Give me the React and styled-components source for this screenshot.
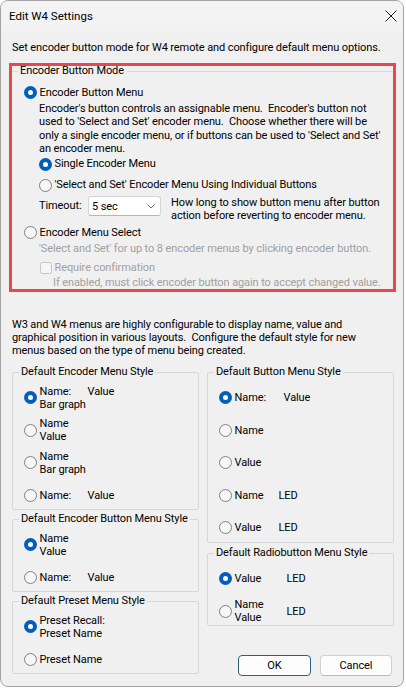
import React from "react";
import styled, { createGlobalStyle, css } from "styled-components";

const GlobalStyle = createGlobalStyle`
  html, body { margin: 0; padding: 0; background: #ffffff; }
  body {
    font-family: Roboto, "Segoe UI", "Noto Sans", "Liberation Sans", sans-serif;
    font-size: 11px;
    letter-spacing: -0.1px;
    color: #000000;
  }
  * { box-sizing: border-box; }
`;

const Window = styled.div`
  width: 404px;
  height: 687px;
  border: 1px solid #a3a3a3;
  border-radius: 8px;
  overflow: hidden;
  background: #f0f0f0;
  display: flex;
  flex-direction: column;
`;

const TitleBar = styled.div`
  height: 30px;
  flex: none;
  display: flex;
  align-items: center;
  justify-content: space-between;
  padding: 0 6px 0 8px;
  background: #f3f3f3;
  font-size: 11.5px;
  letter-spacing: 0;
`;

const CloseIcon = () => (
  <svg width="12" height="12" viewBox="0 0 12 12" aria-hidden="true">
    <path d="M0.5 0.5 L11.5 11.5 M11.5 0.5 L0.5 11.5" stroke="#1b1b1b" strokeWidth="1" fill="none" />
  </svg>
);

const Body = styled.div`
  flex: 1;
  display: flex;
  flex-direction: column;
  padding: 9px 7px 0 8px;
`;

const Intro = styled.div`
  margin-left: 3px;
  line-height: 16px;
  white-space: nowrap;
`;

const Highlight = styled.div`
  margin-top: 7px;
  border: 3px solid #e5484f;
  padding: 0;
`;

const ModeGroup = styled.fieldset`
  margin: -2px 0 0 0;
  padding: 0;
  min-width: 0;
  border: none;
  border-top: 1px solid #d9d9d9;
`;

const Legend = styled.legend`
  margin-left: ${(p) => p.$offset ?? 6}px;
  padding: 0 2px;
  line-height: 14px;
  white-space: nowrap;
`;

const ModeContent = styled.div`
  padding-left: 12px;
  display: flex;
  flex-direction: column;
`;

const RadioRow = styled.div`
  display: flex;
  align-items: center;
  gap: 2.5px;
  line-height: 14px;
  white-space: nowrap;
  margin-top: ${(p) => p.$mt ?? 0}px;
  margin-left: ${(p) => p.$ml ?? 0}px;
  color: ${(p) => (p.$disabled ? "#a0a0a0" : "#000")};
`;

const RadioCircle = styled.span`
  flex: none;
  width: 13px;
  height: 13px;
  border-radius: 50%;
  ${(p) =>
    p.$checked
      ? css`
          background: #005fb8;
          display: flex;
          align-items: center;
          justify-content: center;
          &::after {
            content: "";
            width: 5px;
            height: 5px;
            border-radius: 50%;
            background: #ffffff;
          }
        `
      : css`
          background: #f7f7f7;
          border: 1px solid #7f7f7f;
        `}
`;

const CheckBox = styled.span`
  flex: none;
  width: 12px;
  height: 12px;
  border-radius: 2.5px;
  border: 1px solid #c4c4c4;
  background: #f5f5f5;
`;

const Para = styled.div`
  margin-top: ${(p) => p.$mt ?? 0}px;
  margin-left: ${(p) => p.$ml ?? 0}px;
  margin-bottom: ${(p) => p.$mb ?? 0}px;
  line-height: ${(p) => p.$lh ?? 13}px;
  white-space: nowrap;
  color: ${(p) => (p.$disabled ? "#a0a0a0" : "#000")};
`;

const TimeoutRow = styled.div`
  display: flex;
  align-items: flex-start;
  margin-top: 4px;
  margin-left: 15px;
`;

const TimeoutLabel = styled.span`
  flex: none;
  width: 49px;
  line-height: 20px;
`;

const Select = styled.div`
  flex: none;
  width: 73px;
  height: 20px;
  display: flex;
  align-items: center;
  justify-content: space-between;
  padding: 0 5px 0 3px;
  background: #ffffff;
  border: 1px solid #d6d6d6;
  border-bottom-color: #b5b5b5;
  border-radius: 3px;
`;

const Chevron = () => (
  <svg width="8" height="5" viewBox="0 0 8 5" aria-hidden="true">
    <path d="M0.5 0.5 L4 4 L7.5 0.5" stroke="#6a6a6a" strokeWidth="1" fill="none" />
  </svg>
);

const TimeoutHelp = styled.div`
  margin-left: 10px;
  margin-top: -0.5px;
  line-height: 13px;
  white-space: nowrap;
`;

const StylesText = styled.div`
  margin-top: 25.5px;
  margin-left: 3px;
  line-height: 13px;
  white-space: nowrap;
`;

const Columns = styled.div`
  margin-top: 8.5px;
  margin-left: 3px;
  display: grid;
  grid-template-columns: 187px 187px;
  column-gap: 8px;
  align-items: start;
`;

const Column = styled.div`
  display: flex;
  flex-direction: column;
`;

const GroupBox = styled.fieldset`
  margin: ${(p) => p.$mt ?? 0}px 0 0 0;
  padding: 0;
  min-width: 0;
  border: 1px solid #d7d7d7;
  border-radius: 2px;
`;

const OptionList = styled.div`
  display: flex;
  flex-direction: column;
  gap: 4.5px;
  padding: 4.5px 0 0 11px;
`;

const Option = styled.div`
  height: 28px;
  display: flex;
  align-items: center;
  gap: 2.5px;
  white-space: nowrap;
`;

const Pair = styled.div`
  display: flex;
  align-items: center;
`;

const Cell = styled.div`
  flex: none;
  width: ${(p) => (p.$w ? `${p.$w}px` : "auto")};
  line-height: 13px;
`;

const Lines = styled.div`
  display: flex;
  flex-direction: column;
  line-height: 13px;
`;

const ButtonRow = styled.div`
  margin-top: 29px;
  display: flex;
  justify-content: flex-end;
  gap: 9px;
  padding-right: 2px;
`;

const Button = styled.button`
  width: ${(p) => p.$w}px;
  height: 21px;
  padding: 0;
  font: inherit;
  letter-spacing: inherit;
  color: #000;
  background: #fdfdfd;
  border: 1px solid #d0d0d0;
  border-bottom-color: #bcbcbc;
  border-radius: 4px;
  ${(p) =>
    p.$primary &&
    css`
      border: 1px solid #2b5f7e;
      box-shadow: inset 0 0 0 1px #ffffff;
    `}
`;

function Radio({ checked, children, mt, ml, disabled }) {
  return (
    <RadioRow $mt={mt} $ml={ml} $disabled={disabled}>
      <RadioCircle $checked={checked} />
      <span>{children}</span>
    </RadioRow>
  );
}

function OptionItem({ checked, children }) {
  return (
    <Option>
      <RadioCircle $checked={checked} />
      {children}
    </Option>
  );
}

function Two({ w, a, b }) {
  return (
    <Pair>
      <Cell $w={w}>{a}</Cell>
      <Cell>{b}</Cell>
    </Pair>
  );
}

export default function App() {
  return (
    <>
      <GlobalStyle />
      <Window>
        <TitleBar>
          <span>Edit W4 Settings</span>
          <CloseIcon />
        </TitleBar>
        <Body>
          <Intro>Set encoder button mode for W4 remote and configure default menu options.</Intro>
          <Highlight>
            <ModeGroup>
              <Legend>Encoder Button Mode</Legend>
              <ModeContent>
                <Radio checked mt={7.5}>Encoder Button Menu</Radio>
                <Para $ml={15} $mt={2.25} $lh={13.5}>
                  Encoder's button controls an assignable menu.{"\u00a0 "}Encoder's button not
                  <br />
                  used to 'Select and Set' encoder menu.{"\u00a0 "}Choose whether there will be
                  <br />
                  only a single encoder menu, or if buttons can be used to 'Select and Set'
                  <br />
                  an encoder menu.
                </Para>
                <Radio checked ml={15} mt={1.25}>Single Encoder Menu</Radio>
                <Radio ml={15} mt={7}>'Select and Set' Encoder Menu Using Individual Buttons</Radio>
                <TimeoutRow>
                  <TimeoutLabel>Timeout:</TimeoutLabel>
                  <Select>
                    <span>5 sec</span>
                    <Chevron />
                  </Select>
                  <TimeoutHelp>
                    How long to show button menu after button
                    <br />
                    action before reverting to encoder menu.
                  </TimeoutHelp>
                </TimeoutRow>
                <Radio mt={4}>Encoder Menu Select</Radio>
                <Para $ml={15} $mt={2} $lh={14} $disabled>
                  'Select and Set' for up to 8 encoder menus by clicking encoder button.
                </Para>
                <RadioRow $ml={16} $mt={5.5} $disabled>
                  <CheckBox />
                  <span>Require confirmation</span>
                </RadioRow>
                <Para $ml={29} $mt={1} $mb={-1} $lh={14} $disabled>
                  If enabled, must click encoder button again to accept changed value.
                </Para>
              </ModeContent>
            </ModeGroup>
          </Highlight>

          <StylesText>
            W3 and W4 menus are highly configurable to display name, value and
            <br />
            graphical position in various layouts.{"\u00a0 "}Configure the default style for new
            <br />
            menus based on the type of menu being created.
          </StylesText>

          <Columns>
            <Column>
              <GroupBox>
                <Legend>Default Encoder Menu Style</Legend>
                <OptionList>
                  <OptionItem checked>
                    <Lines>
                      <Two w={48} a="Name:" b="Value" />
                      <span>Bar graph</span>
                    </Lines>
                  </OptionItem>
                  <OptionItem>
                    <Lines>
                      <span>Name</span>
                      <span>Value</span>
                    </Lines>
                  </OptionItem>
                  <OptionItem>
                    <Lines>
                      <span>Name</span>
                      <span>Bar graph</span>
                    </Lines>
                  </OptionItem>
                  <OptionItem>
                    <Two w={48} a="Name:" b="Value" />
                  </OptionItem>
                </OptionList>
              </GroupBox>

              <GroupBox $mt={2}>
                <Legend>Default Encoder Button Menu Style</Legend>
                <OptionList>
                  <OptionItem checked>
                    <Lines>
                      <span>Name</span>
                      <span>Value</span>
                    </Lines>
                  </OptionItem>
                  <OptionItem>
                    <Two w={48} a="Name:" b="Value" />
                  </OptionItem>
                </OptionList>
              </GroupBox>

              <GroupBox $mt={2}>
                <Legend>Default Preset Menu Style</Legend>
                <OptionList>
                  <OptionItem checked>
                    <Lines>
                      <span>Preset Recall:</span>
                      <span>Preset Name</span>
                    </Lines>
                  </OptionItem>
                  <OptionItem>
                    <span>Preset Name</span>
                  </OptionItem>
                </OptionList>
              </GroupBox>
            </Column>

            <Column>
              <GroupBox>
                <Legend>Default Button Menu Style</Legend>
                <OptionList>
                  <OptionItem checked>
                    <Two w={49} a="Name:" b="Value" />
                  </OptionItem>
                  <OptionItem>
                    <span>Name</span>
                  </OptionItem>
                  <OptionItem>
                    <span>Value</span>
                  </OptionItem>
                  <OptionItem>
                    <Two w={44} a="Name" b="LED" />
                  </OptionItem>
                  <OptionItem>
                    <Two w={44} a="Value" b="LED" />
                  </OptionItem>
                </OptionList>
              </GroupBox>

              <GroupBox $mt={3.5}>
                <Legend>Default Radiobutton Menu Style</Legend>
                <OptionList>
                  <OptionItem checked>
                    <Two w={52} a="Value" b="LED" />
                  </OptionItem>
                  <OptionItem>
                    <Pair>
                      <Cell $w={52}>
                        <Lines>
                          <span>Name</span>
                          <span>Value</span>
                        </Lines>
                      </Cell>
                      <Cell>LED</Cell>
                    </Pair>
                  </OptionItem>
                </OptionList>
              </GroupBox>

              <ButtonRow>
                <Button $w={73} $primary>OK</Button>
                <Button $w={72}>Cancel</Button>
              </ButtonRow>
            </Column>
          </Columns>
        </Body>
      </Window>
    </>
  );
}
